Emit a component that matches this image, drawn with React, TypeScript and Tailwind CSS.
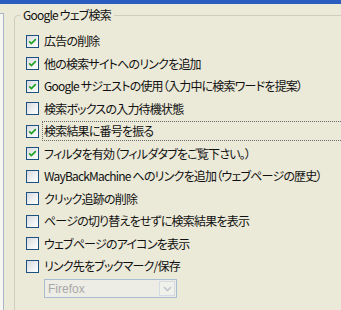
import React from "react";

type Item = { label: string; checked: boolean; focused?: boolean };

const items: Item[] = [
  { label: "広告の削除", checked: true },
  { label: "他の検索サイトへのリンクを追加", checked: true },
  { label: "Google サジェストの使用（入力中に検索ワードを提案）", checked: true },
  { label: "検索ボックスの入力待機状態", checked: false },
  { label: "検索結果に番号を振る", checked: true, focused: true },
  { label: "フィルタを有効（フィルダタブをご覧下さい。）", checked: true },
  { label: "WayBackMachine へのリンクを追加（ウェブページの歴史）", checked: false },
  { label: "クリック追跡の削除", checked: false },
  { label: "ページの切り替えをせずに検索結果を表示", checked: false },
  { label: "ウェブページのアイコンを表示", checked: false },
  { label: "リンク先をブックマーク/保存", checked: false },
];

const Check = ({ checked }: { checked: boolean }) => (
  <div className="w-[13px] h-[13px] shrink-0 border border-[#1c5180] bg-linear-to-br from-[#d6d9e0] via-[#eceef0] to-white flex items-center justify-center">
    {checked && (
      <svg width="9" height="9" viewBox="0 0 9 9">
        <path d="M1.2 4.4 L3.4 6.5 L7.8 2.2" fill="none" stroke="#21a121" strokeWidth="1.7" />
      </svg>
    )}
  </div>
);

const Row = ({ item }: { item: Item }) => (
  <div className="h-[22.5px] flex items-center pl-[11px]">
    <Check checked={item.checked} />
    <span
      className={
        item.focused
          ? "ml-[3px] flex-1 h-[20px] flex items-center px-[1px] border border-dotted border-[#6b6b6b] whitespace-nowrap"
          : "ml-[5px] whitespace-nowrap"
      }
    >
      {item.label}
    </span>
  </div>
);

export default function App() {
  return (
    <div className="w-[341px] h-[310px] overflow-hidden bg-[#ebe9d8] text-[12px] leading-[14px] tracking-[-0.8px] text-[#111] font-['Noto_Sans_CJK_JP','Noto_Sans',sans-serif] [font-feature-settings:'palt']">
      <div className="h-[4px] bg-[#2b5cc0]" />
      <div className="flex h-[306px]">
        <div className="w-[4px] shrink-0 mt-[9px] bg-[#f7f7f2] border-r border-t border-[#a8b6c8]" />
        <div className="flex-1 overflow-hidden pt-[4px]">
          <fieldset className="ml-[10px] w-[360px] h-[330px] border border-[#cfcdbd] rounded-tl-[4px]">
            <legend className="ml-[5px] px-[3px] leading-[14px]">Google ウェブ検索</legend>
            <div className="pt-[8px]">
              {items.map((it) => (
                <Row key={it.label} item={it} />
              ))}
              <div className="h-[22.5px] flex items-center pl-[29px]">
                <div className="w-[133px] h-[19px] border border-[#a9bbd3] bg-[#eeede5] flex items-center">
                  <span className="flex-1 pl-[3px] tracking-normal text-[#a8a8a8] font-['Liberation_Sans',sans-serif]">Firefox</span>
                  <div className="w-[16px] h-[15px] mr-[1px] border border-[#d4dbe6] bg-[#f1f1ec] flex items-center justify-center">
                    <svg width="9" height="6" viewBox="0 0 9 6">
                      <path d="M1 1 L4.5 4.5 L8 1" fill="none" stroke="#c2c6cc" strokeWidth="1.6" />
                    </svg>
                  </div>
                </div>
              </div>
            </div>
          </fieldset>
        </div>
      </div>
    </div>
  );
}
